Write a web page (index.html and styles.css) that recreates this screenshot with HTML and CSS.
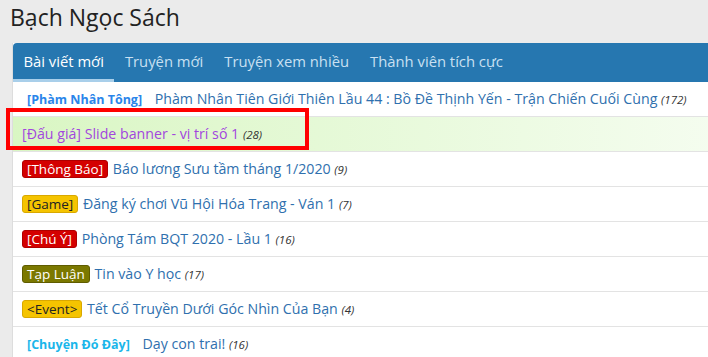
FILE: index.html
```html
<!DOCTYPE html>
<html>
<head>
	<meta charset="utf-8">
	<title>Bạch Ngọc Sách</title>
	<link rel="stylesheet" href="styles.css">
</head>
<body>
<div class="wrap">
	<h1 class="site-title">Bạch Ngọc Sách</h1>

	<div class="panel">
		<ul class="tabs">
			<li class="active"><a href="#">Bài viết mới</a></li>
			<li><a href="#">Truyện mới</a></li>
			<li><a href="#">Truyện xem nhiều</a></li>
			<li><a href="#">Thành viên tích cực</a></li>
		</ul>

		<ul class="posts">
			<li><span class="tag tag-blue">[Phàm Nhân Tông]</span> <a href="#">Phàm Nhân Tiên Giới Thiên Lầu 44 : Bồ Đề Thịnh Yến - Trận Chiến Cuối Cùng</a> <i class="count">(172)</i></li>
			<li class="sticky"><a href="#">[Đấu giá] Slide banner - vị trí số 1</a> <i class="count">(28)</i>
				<div class="mark"></div>
			</li>
			<li><span class="tag tag-red">[Thông Báo]</span> <a href="#">Báo lương Sưu tầm tháng 1/2020</a> <i class="count">(9)</i></li>
			<li><span class="tag tag-yellow">[Game]</span> <a href="#">Đăng ký chơi Vũ Hội Hóa Trang - Ván 1</a> <i class="count">(7)</i></li>
			<li><span class="tag tag-red">[Chú Ý]</span> <a href="#">Phòng Tám BQT 2020 - Lầu 1</a> <i class="count">(16)</i></li>
			<li><span class="tag tag-olive">Tạp Luận</span> <a href="#">Tin vào Y học</a> <i class="count">(17)</i></li>
			<li><span class="tag tag-yellow">&lt;Event&gt;</span> <a href="#">Tết Cổ Truyền Dưới Góc Nhìn Của Bạn</a> <i class="count">(4)</i></li>
			<li><span class="tag tag-cyan">[Chuyện Đó Đây]</span> <a href="#">Dạy con trai!</a> <i class="count">(16)</i></li>
		</ul>
	</div>
</div>
</body>
</html>
```

FILE: styles.css
```css
body {margin: 0; background: #ebebeb; font-family: "Open Sans", "Noto Sans", sans-serif; color: #222; overflow: hidden;}
.wrap {padding-left: 12px;}
.site-title {font-size: 23px; font-weight: normal; line-height: 30px; margin: 2px 0 11px -2px; color: #222;}

.panel {background: #fff; border-left: 1px solid #ddd; margin-right: -20px;}

.tabs {list-style: none; margin: 0; padding: 0; display: flex; background: #2677b0; border-radius: 4px 0 0 0; height: 39px;}
.tabs li {display: block;}
.tabs a {display: block; padding: 0 10.5px; line-height: 36px; height: 36px; font-size: 14.8px; color: #c9e0f2; text-decoration: none; border-bottom: 3px solid transparent;}
.tabs li.active a {color: #fff; border-bottom-color: #a9cfea;}

.posts {list-style: none; margin: 0; padding: 0;}
.posts li {position: relative; padding: 7px 10px 7px 9px; line-height: 19px; border-bottom: 1px solid #e3e3e3; font-size: 14.2px; white-space: nowrap;}
.posts a {color: #2f70ae; text-decoration: none;}
.count {font-size: 11.5px; color: #333;}

.tag {display: inline-block; font-size: 13.5px; line-height: 16px; padding: 0 4px; border-radius: 3px; border: 1px solid transparent; margin-right: 1px;}
.tag-red {background: #d40000; color: #fff; border-color: #b00000;}
.tag-yellow {background: #f5c400; color: #222; border-color: #d9a800;}
.tag-olive {background: #7b7800; color: #fff; border-color: #5f5c00;}
.tag-blue {font-size: 12.5px; color: #2a85ea; font-weight: bold; margin-right: 4px;}
.tag-cyan {font-size: 12.5px; color: #1ab6ea; font-weight: bold; margin-right: 4px;}

.sticky {background: linear-gradient(to right, #d9f6c3, #f5fdf0);}
.sticky a {color: #a246de;}
.mark {position: absolute; left: -7px; top: -9px; width: 295px; height: 34px; border: 4px solid #f00;}
```
